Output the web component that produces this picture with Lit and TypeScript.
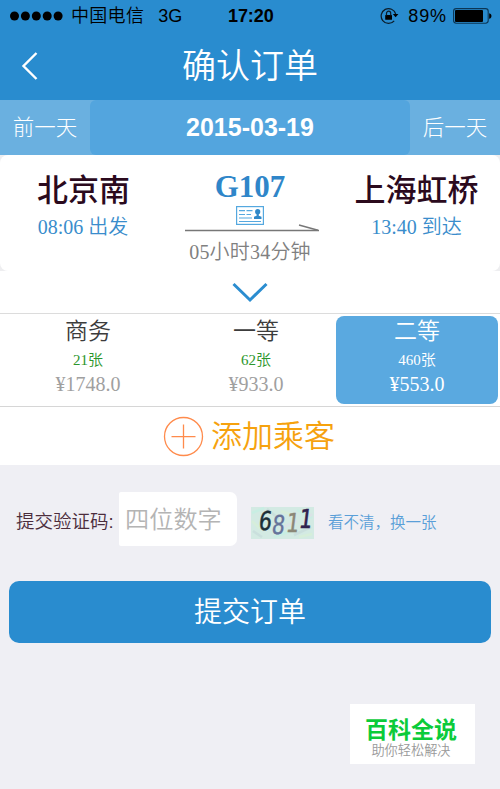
import { LitElement, html, css, svg } from "lit";
import { customElement, property } from "lit/decorators.js";
import { classMap } from "lit/directives/class-map.js";

interface Seat {
  name: string;
  left: string;
  price: string;
  selected?: boolean;
}

const SEATS: Seat[] = [
  { name: "商务", left: "21张", price: "¥1748.0" },
  { name: "一等", left: "62张", price: "¥933.0" },
  { name: "二等", left: "460张", price: "¥553.0", selected: true },
];

@customElement("status-bar")
class StatusBar extends LitElement {
  static styles = css`
    :host { display: grid; grid-template-columns: 228px 1fr auto; align-items: center; height: 32px; color: #000;
      font: 18px/32px "Liberation Sans", "Noto Sans CJK SC", sans-serif; white-space: nowrap; }
    .left, .right { display: flex; align-items: center; }
    .dots { margin-left: 10px; }
    .carrier { margin-left: 8px; letter-spacing: 0.3px; font-weight: 350; padding-top: 1px; line-height: 31px; }
    .net { margin-left: 14px; padding-top: 1px; line-height: 31px; }
    .time { font-weight: 700; letter-spacing: -0.1px; padding-top: 1px; line-height: 31px; }
    .lock { margin-right: 9px; }
    .pct { letter-spacing: 0.9px; margin-right: 6px; padding-top: 1px; line-height: 31px; }
    .battery { margin-right: 8px; }
    svg { display: block; }
  `;
  render() {
    return html`
      <div class="left">
        <svg class="dots" width="53" height="10" viewBox="0 0 53 10">
          ${[0, 1, 2, 3, 4].map((i) => svg`<circle cx=${4.5 + i * 10.9} cy="5" r="4.5" />`)}
        </svg>
        <span class="carrier">中国电信</span><span class="net">3G</span>
      </div>
      <div class="time">17:20</div>
      <div class="right">
        <svg class="lock" width="19" height="18" viewBox="0 0 19 18" fill="none" stroke="#0b1c29" stroke-width="1.2">
          <path d="M14.2 13.8A7.4 7.4 0 1 1 15.7 7" />
          <path d="M12.8 7h5.6l-2.8 3.3z" fill="#000" stroke="none" />
          <rect x="5.200" y="8" width="6.8" height="4.8" rx=".6" fill="#000" stroke="none" />
          <path d="M6.5 8.4V6.3a2.1 2.1 0 0 1 4.2 0v2.1" />
        </svg>
        <span class="pct">89%</span>
        <svg class="battery" width="39" height="16" viewBox="0 0 39 16">
          <rect x=".6" y=".6" width="34.6" height="14.6" rx="2.6" fill="none" stroke="#0b3655" stroke-width="1.1" />
          <rect x="2" y="2" width="28" height="12" rx="1" />
          <path d="M36.2 5.2c3 .6 3 4.900 0 5.600z" />
        </svg>
      </div>
    `;
  }
}

@customElement("trip-card")
class TripCard extends LitElement {
  static styles = css`
    :host { display: block; background: #fff; }
    .corners { background: #eeeef0; }
    .card { display: grid; grid-template-columns: 167px 166px 167px; height: 116px; background: #fff; border-radius: 8px;
      text-align: center; white-space: nowrap; font-family: "Liberation Serif", "Noto Sans CJK SC", serif; }
    .station { font-size: 31px; line-height: 36px; margin-top: 18px; font-weight: 500; color: #2b0a1d; }
    .time { font-size: 20px; line-height: 26px; margin-top: 5px; color: #3a8dcc; font-weight: 350; }
    .from .time { padding-right: 1px; }
    .no { font-size: 31px; line-height: 36px; margin-top: 14px; font-weight: 700; color: #2f86c9; }
    .mid svg { display: block; }
    .id { margin: 1px auto 0; }
    .arrow { margin: -2px 0 0 18px; }
    .dur { font-size: 20px; line-height: 26px; margin-top: 7px; color: #808080; font-weight: 350; letter-spacing: .2px; }
    .more { height: 42px; display: flex; justify-content: center; }
    .more svg { margin-top: 10px; }
  `;
  render() {
    return html`
      <div class="corners">
        <div class="card">
          <div class="from">
            <div class="station">北京南</div>
            <div class="time">08:06 出发</div>
          </div>
          <div class="mid">
            <div class="no">G107</div>
            <svg class="id" width="28" height="19" viewBox="0 0 28 19" fill="none" stroke="#55a8df">
              <rect x=".6" y=".6" width="26.8" height="17.8" stroke-width="1.2" />
              <path d="M3 4.7h6M10.500 4.7h6M3 8.500h6M10.500 8.500h4.500M3 12h13M3 15.5h22" stroke-width="1.2" />
              <circle cx="21.700" cy="5.700" r="2.600" fill="#3089c9" stroke="none" />
              <path d="M18 13v-2.200l2.600-1v-2h2.200v2l2.700 1V13z" fill="#3089c9" stroke="none" />
            </svg>
            <svg class="arrow" width="136" height="9" viewBox="0 0 136 9" fill="none" stroke="#777">
              <path d="M0 7.500H134" stroke-width="1.400" /><path d="M114 2L133 7.200" stroke-width="1.400" />
            </svg>
            <div class="dur">05小时34分钟</div>
          </div>
          <div class="to">
            <div class="station">上海虹桥</div>
            <div class="time">13:40 到达</div>
          </div>
        </div>
      </div>
      <div class="more">
        <svg width="36" height="22" viewBox="0 0 36 22" fill="none" stroke="#2b8dd0" stroke-width="3">
          <path d="M1.500 3L18 19L34.500 3" />
        </svg>
      </div>
    `;
  }
}

@customElement("seat-tabs")
class SeatTabs extends LitElement {
  @property({ attribute: false }) seats: Seat[] = [];
  static styles = css`
    :host { display: grid; grid-template-columns: 176px 160px 162px; height: 94px; box-sizing: border-box;
      border-top: 1px solid #dcdcdc; border-bottom: 1px solid #d6d6d6; padding: 2px 2px 2px 0; background: #fff; }
    .seat { height: 88px; text-align: center; border-radius: 8px; white-space: nowrap; color: #a0a0a0;
      font-family: "Liberation Serif", "Noto Sans CJK SC", serif; font-weight: 350; }
    .name { font-size: 23px; line-height: 30px; padding-top: 1px; color: #3c3c3c; }
    .left { font-size: 15px; line-height: 20px; margin-top: 3px; color: #2c962c; }
    .price { font-size: 20px; line-height: 24px; margin-top: 2px; }
    .on, .on .name, .on .left { color: #fff; }
    .on { background: #5aa9e0; }
  `;
  render() {
    return this.seats.map(
      (s) => html`<div class=${classMap({ seat: true, on: !!s.selected })}>
        <div class="name">${s.name}</div>
        <div class="left">${s.left}</div>
        <div class="price">${s.price}</div>
      </div>`
    );
  }
}

@customElement("captcha-image")
class CaptchaImage extends LitElement {
  static styles = css`
    :host { display: block; width: 63px; height: 32px; }
    svg { display: block; overflow: visible; }
    text { font: 26px "DejaVu Sans Mono", monospace; }
  `;
  render() {
    return html`<svg width="63" height="32" viewBox="0 0 63 32">
      <rect width="63" height="32" fill="#d3eae3" />
      <g fill="none" stroke-width="2.500" opacity=".5">
        <path d="M1 6L13 1M23 30L40 24M46 3L61 11" stroke="#bff3e3" />
        <path d="M2 24L11 30M16 2L28 12M43 28L60 20" stroke="#c2d6d8" />
        <path d="M1 14L9 22M30 4L44 9M48 30L61 27" stroke="#d9f3d2" />
        <path d="M33 20L46 14M52 15L61 7" stroke="#e0dcea" />
      </g>
      <text fill="#1d2f38" stroke="#1d2f38" stroke-width=".5" transform="translate(7 22.500) skewX(-7)" textLength="13" lengthAdjust="spacingAndGlyphs">6</text>
      <text fill="#66749b" stroke="#66749b" stroke-width=".3" transform="translate(20 27) skewX(-7)" textLength="13" lengthAdjust="spacingAndGlyphs">8</text>
      <text fill="#8b8878" stroke="#8b8878" stroke-width=".4" transform="translate(34 25) skewX(-7)" textLength="13" lengthAdjust="spacingAndGlyphs">1</text>
      <text fill="#30224f" stroke="#30224f" stroke-width=".6" transform="translate(47 20.500) skewX(-7)" textLength="13" lengthAdjust="spacingAndGlyphs">1</text>
    </svg>`;
  }
}

@customElement("app-root")
class AppRoot extends LitElement {
  static styles = css`
    :host { display: block; position: relative; width: 500px; height: 789px; overflow: hidden; background: #efeff4;
      font-family: "Liberation Sans", "Noto Sans CJK SC", sans-serif; white-space: nowrap; }
    .top { background: #298ccf; height: 100px; }
    .nav { display: grid; grid-template-columns: 60px 1fr 60px; height: 68px; align-items: center; color: #fff; }
    .nav svg { margin-left: 21px; display: block; }
    .title { text-align: center; font-size: 34px; line-height: 40px; font-weight: 350; padding-bottom: 1px; }
    .days { display: grid; grid-template-columns: 90px 320px 90px; height: 55px; line-height: 55px; text-align: center;
      background: #6ab0e0; color: #fff; }
    .day { font-size: 21.500px; font-weight: 300; padding-top: 1px; line-height: 54px; }
    .date { background: #53a5de; border-radius: 6px; font-size: 25px; font-weight: 700; }
    .add { height: 58px; background: #fff; display: flex; align-items: center; color: #f6a20e; font-size: 31px; line-height: 40px;
      font-weight: 350; }
    .add svg { margin: 0 7px 0 163px; }
    .add span { padding-top: 2px; }
    .verify { display: flex; align-items: center; height: 54px; margin-top: 27px; padding-left: 16px; }
    .label { width: 103px; padding-top: 2px; font-size: 18.500px; color: #4b2d3c; font-weight: 350; }
    .code { width: 118px; height: 54px; box-sizing: border-box; background: #fff; border-radius: 2px 7px 7px 2px; padding-left: 6px;
      font-size: 24.200px; line-height: 56px; color: #b4b4b4; font-weight: 350; }
    captcha-image { margin: 7px 14px 0 14px; }
    .swap { font-size: 15.500px; color: #5a9fd8; padding-top: 4px; font-weight: 350; }
    .submit { margin: 35px 9px 0; height: 62px; border-radius: 10px; background: #298ccf; color: #fff; text-align: center;
      font-size: 28px; line-height: 64px; font-weight: 350; }
    .mark { position: absolute; left: 350px; top: 704px; width: 125px; height: 60px; background: #fff; text-align: center; }
    .brand { font-size: 23px; line-height: 28px; font-weight: 700; color: #0bcb3a; margin-top: 12px; padding-right: 3px; }
    .slogan { font-size: 13.200px; line-height: 16px; color: #999; padding-right: 3px; margin-top: -1px; font-weight: 350; }
  `;
  render() {
    return html`
      <div class="top">
        <status-bar></status-bar>
        <div class="nav">
          <svg width="18" height="28" viewBox="0 0 18 28" fill="none" stroke="#fff" stroke-width="2.400">
            <path d="M15.500 1L2.500 14L15.500 27" />
          </svg>
          <div class="title">确认订单</div>
        </div>
      </div>
      <div class="days">
        <div class="day">前一天</div>
        <div class="date">2015-03-19</div>
        <div class="day">后一天</div>
      </div>
      <trip-card></trip-card>
      <seat-tabs .seats=${SEATS}></seat-tabs>
      <div class="add">
        <svg width="41" height="41" viewBox="0 0 41 41" fill="none" stroke="#ff8b4c" stroke-width="1.300">
          <circle cx="20.500" cy="20.500" r="19" /><path d="M8.500 20.700H32.500M20.500 8.500V32.500" />
        </svg>
        <span>添加乘客</span>
      </div>
      <div class="verify">
        <div class="label">提交验证码:</div>
        <div class="code">四位数字</div>
        <captcha-image></captcha-image>
        <div class="swap">看不清，换一张</div>
      </div>
      <div class="submit">提交订单</div>
      <div class="mark">
        <div class="brand">百科全说</div>
        <div class="slogan">助你轻松解决</div>
      </div>
    `;
  }
}
